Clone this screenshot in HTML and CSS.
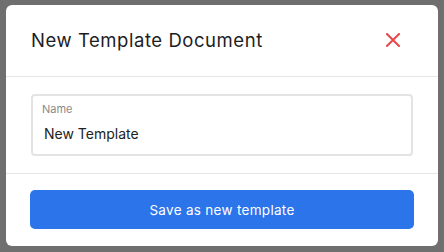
FILE: index.html
```html
<!DOCTYPE html>
<html lang="en">
<head>
    <meta charset="UTF-8">
    <meta name="viewport" content="width=device-width, initial-scale=1.0">
    <title>New Template Document</title>
    <link rel="stylesheet" href="styles.css">
</head>

<body>
    <div class="modal">
        <div class="modal-header">
            <h2 class="title">New Template Document</h2>
            <button class="close" aria-label="Close">
                <svg width="14" height="14" viewBox="0 0 14 14">
                    <path d="M1 1 L13 13 M13 1 L1 13" stroke="#e8474a" stroke-width="2" stroke-linecap="square" fill="none"/>
                </svg>
            </button>
        </div>
        <div class="modal-body">
            <label class="field">
                <span class="field-label">Name</span>
                <input class="field-input" type="text" value="New Template">
            </label>
        </div>
        <div class="modal-footer">
            <button class="save-btn">Save as new template</button>
        </div>
    </div>
</body>

</html>
```

FILE: styles.css
```css
* {
    margin: 0;
    padding: 0;
    box-sizing: border-box;
    font-family: 'Inter', 'Liberation Sans', sans-serif;
}

body {
    background: #6f6f6f;
    width: 444px;
    height: 252px;
    padding: 5px 6px 6px 6px;
}

.modal {
    background: white;
    border-radius: 6px;
    height: 241px;
    display: flex;
    flex-direction: column;
}

.modal-header {
    height: 72px;
    display: flex;
    align-items: center;
    justify-content: space-between;
    padding: 0 25px 1px 25px;
    border-bottom: 1px solid #e6e6e6;
}

.title {
    font-size: 18.5px;
    font-weight: normal;
    letter-spacing: 0.55px;
    color: #1d1d1f;
}

.close {
    background: none;
    border: none;
    width: 14px;
    height: 14px;
    margin-right: 13px;
    display: flex;
    cursor: pointer;
}

.modal-body {
    padding: 17px 25px;
    border-bottom: 1px solid #e6e6e6;
}

.field {
    display: flex;
    flex-direction: column;
    height: 62px;
    border: 2px solid #e3e3e3;
    border-radius: 4px;
    padding: 6px 9px 0 9px;
}

.field-label {
    font-size: 11px;
    color: #8a8a8a;
    line-height: 14px;
}

.field-input {
    border: none;
    outline: none;
    font-size: 14px;
    color: #222;
    margin-top: 9px;
    padding-left: 2px;
    background: transparent;
}

.modal-footer {
    padding: 16px 24px;
}

.save-btn {
    width: 100%;
    height: 39px;
    border: none;
    border-radius: 5px;
    background: #2b74ea;
    color: white;
    font-size: 13.5px;
    letter-spacing: 0.3px;
    cursor: pointer;
}
```
